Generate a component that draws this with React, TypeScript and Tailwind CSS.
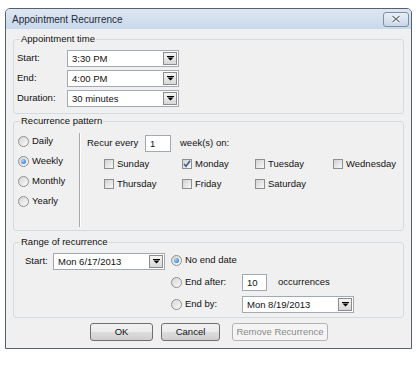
import React from "react";

function Arrow() {
  return (
    <svg width="7" height="5" viewBox="0 0 7 5">
      <path d="M0 0h7v1H0z M0.5 1.5h6L3.5 4.5z" fill="#000" />
    </svg>
  );
}

function Combo({ value, className }: { value: string; className: string }) {
  return (
    <div className={`flex h-[17px] border border-[#a3a9b1] bg-white ${className}`}>
      <span className="flex-1 pl-[4px] leading-[15px]">{value}</span>
      <span className="m-[1px] flex w-[14px] items-center justify-center border border-[#8b8b8b] bg-gradient-to-b from-[#f4f4f4] to-[#d8d8d8]">
        <Arrow />
      </span>
    </div>
  );
}

function Radio({ checked }: { checked?: boolean }) {
  return (
    <span className="flex h-[11px] w-[11px] shrink-0 items-center justify-center rounded-full border border-[#8e8f8f] bg-gradient-to-br from-[#d6d6d6] to-[#fbfbfb]">
      {checked && (
        <span className="h-[5px] w-[5px] rounded-full bg-[radial-gradient(circle_at_35%_35%,#a6d8ff,#1b63b8)]" />
      )}
    </span>
  );
}

function Check({ checked }: { checked?: boolean }) {
  return (
    <span className="flex h-[10px] w-[10px] shrink-0 items-center justify-center border border-[#8e8f8f] bg-gradient-to-br from-[#d2d2d2] to-[#f8f8f8]">
      {checked && (
        <svg width="8" height="8" viewBox="0 0 8 8">
          <path d="M1 4l2 2.3L7 0.8" stroke="#3e5a8c" strokeWidth="1.6" fill="none" />
        </svg>
      )}
    </span>
  );
}

function Group({ title, className, children }: { title: string; className: string; children: React.ReactNode }) {
  return (
    <fieldset className={`rounded-[3px] border border-[#d3dbe0] ${className}`}>
      <legend className="ml-[6px] px-[1px] leading-[12px]">{title}</legend>
      {children}
    </fieldset>
  );
}

function Button({ label, className, disabled }: { label: string; className: string; disabled?: boolean }) {
  return (
    <div
      className={`flex h-[18px] items-center justify-center rounded-[3px] border ${
        disabled
          ? "border-[#adb2b5] bg-[#f4f4f4] text-[#8a8a8a]"
          : "border-[#707070] bg-[linear-gradient(#f2f2f2,#ebebeb_50%,#dddddd_50%,#cfcfcf)]"
      } ${className}`}
    >
      {label}
    </div>
  );
}

export default function App() {
  const days = ["Sunday", "Monday", "Tuesday", "Wednesday", "Thursday", "Friday", "Saturday"];

  return (
    <div className="h-[365px] w-[420px] bg-white pl-[5px] pt-[8px] font-['Liberation_Sans',Arial,sans-serif] text-[9.5px] text-[#111]">
      <div className="flex h-[341px] w-[407px] flex-col overflow-hidden rounded-t-[5px] border border-[#55606e] bg-[#f0f0f0]">
        {/* title bar */}
        <div className="flex h-[20px] items-center justify-between bg-gradient-to-b from-[#dde7f2] to-[#c9d9eb] pl-[6px] pr-[2px]">
          <span className="text-[10px] text-[#1e2a3a]">Appointment Recurrence</span>
          <span className="flex h-[15px] w-[26px] items-center justify-center rounded-[3px] border border-[#7f8ea3] bg-gradient-to-b from-[#e8eef6] to-[#c9d6e6]">
            <svg width="10" height="8" viewBox="0 0 10 8">
              <path d="M1.5 1l7 6M8.5 1l-7 6" stroke="#fff" strokeWidth="3" />
              <path d="M1.5 1l7 6M8.5 1l-7 6" stroke="#6b7789" strokeWidth="1.4" />
            </svg>
          </span>
        </div>

        <div className="px-[7px]">
          {/* Appointment time */}
          <Group title="Appointment time" className="mt-[4px] h-[81px]">
            <div className="flex flex-col gap-[3px] pl-[3px] pt-[5px]">
              {[
                ["Start:", "3:30 PM"],
                ["End:", "4:00 PM"],
                ["Duration:", "30 minutes"],
              ].map(([label, value]) => (
                <div key={label} className="flex items-center">
                  <span className="w-[50px]">{label}</span>
                  <Combo value={value} className="w-[112px]" />
                </div>
              ))}
            </div>
          </Group>

          {/* Recurrence pattern */}
          <Group title="Recurrence pattern" className="mt-[1px] h-[116px]">
            <div className="flex">
              <div className="flex w-[65px] flex-col pl-[4px] pt-[4px]">
                {["Daily", "Weekly", "Monthly", "Yearly"].map((r) => (
                  <div key={r} className="flex h-[20px] items-center gap-[3px]">
                    <Radio checked={r === "Weekly"} />
                    <span>{r}</span>
                  </div>
                ))}
              </div>
              <div className="mt-[6px] h-[94px] w-[2px] border-l border-r border-l-[#a8a8a8] border-r-white" />
              <div className="pl-[6px] pt-[8px]">
                <div className="flex items-center">
                  <span className="w-[58px]">Recur every</span>
                  <div className="h-[17px] w-[26px] border border-[#a3a9b1] bg-white pl-[4px] leading-[15px]">1</div>
                  <span className="ml-[9px]">week(s) on:</span>
                </div>
                <div className="mt-[2px] grid grid-cols-[78px_73px_78px_auto] pl-[17px]">
                  {days.map((d) => (
                    <div key={d} className="flex h-[20px] items-center gap-[3px]">
                      <Check checked={d === "Monday"} />
                      <span>{d}</span>
                    </div>
                  ))}
                </div>
              </div>
            </div>
          </Group>

          {/* Range of recurrence */}
          <Group title="Range of recurrence" className="mt-[5px] h-[82px]">
            <div className="flex">
              <div className="flex items-center self-start pl-[11px] pt-[5px]">
                <span className="w-[28px]">Start:</span>
                <Combo value="Mon 6/17/2013" className="w-[112px]" />
              </div>
              <div className="ml-[6px] flex flex-col pt-[1px]">
                <div className="flex h-[22px] items-center gap-[3px]">
                  <Radio checked />
                  <span>No end date</span>
                </div>
                <div className="flex h-[22px] items-center gap-[3px]">
                  <Radio />
                  <span className="w-[54px]">End after:</span>
                  <div className="h-[17px] w-[25px] border border-[#a3a9b1] bg-white pl-[4px] leading-[15px]">10</div>
                  <span className="ml-[8px]">occurrences</span>
                </div>
                <div className="flex h-[22px] items-center gap-[3px]">
                  <Radio />
                  <span className="w-[54px]">End by:</span>
                  <Combo value="Mon 8/19/2013" className="w-[112px]" />
                </div>
              </div>
            </div>
          </Group>

          {/* buttons */}
          <div className="mt-[5px] flex pl-[77px]">
            <Button label="OK" className="w-[63px]" />
            <Button label="Cancel" className="ml-[8px] w-[59px]" />
            <Button label="Remove Recurrence" className="ml-[12px] w-[96px]" disabled />
          </div>
        </div>
      </div>
    </div>
  );
}
